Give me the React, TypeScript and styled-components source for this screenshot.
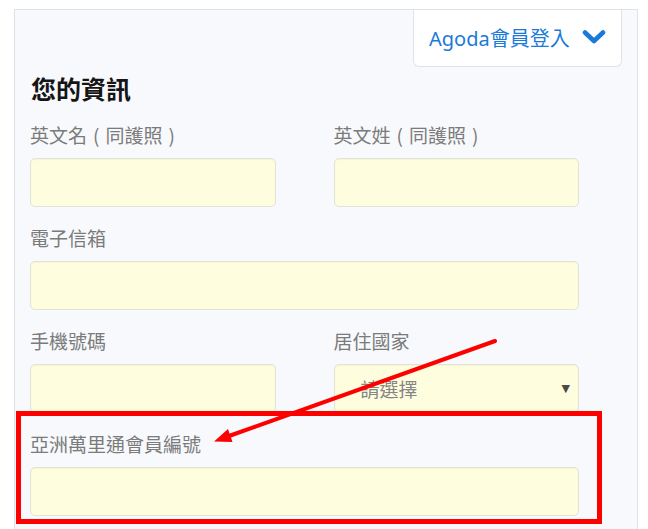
import React from "react";
import styled, { createGlobalStyle } from "styled-components";

const GlobalStyle = createGlobalStyle`
  html, body {
    margin: 0;
    padding: 0;
    background: #ffffff;
    overflow: hidden;
    font-family: "Noto Sans", "Noto Sans CJK TC", sans-serif;
  }
  * { box-sizing: border-box; }
`;

const Page = styled.div`
  position: relative;
  width: 648px;
  height: 529px;
  padding: 9px 0 0 14px;
  overflow: hidden;
`;

const Panel = styled.section`
  width: 624px;
  min-height: 560px;
  display: flex;
  flex-direction: column;
  background: #f7f9fc;
  border: 1px solid #dfe3e8;
  padding: 0 15px 30px 15px;
`;

const LoginButton = styled.button`
  align-self: flex-end;
  height: 57px;
  width: 209px;
  display: flex;
  align-items: center;
  justify-content: space-between;
  padding: 0 15px 2px 15px;
  background: #ffffff;
  border: 1px solid #dfe3e8;
  border-top: none;
  border-radius: 0 0 6px 6px;
  color: #1a7ad9;
  font-family: "Noto Sans", "Noto Sans CJK TC", sans-serif;
  font-size: 20px;
  cursor: pointer;
`;

const Heading = styled.h2`
  margin: 5px 0 18px 1px;
  font-family: "Noto Sans CJK TC", sans-serif;
  font-size: 25px;
  line-height: 32px;
  font-weight: 700;
  color: #151515;
`;

const FormGrid = styled.div`
  display: grid;
  width: 549px;
  grid-template-columns: 1fr 1fr;
  column-gap: 58px;
  row-gap: 18px;
`;

const Field = styled.div<{ $wide?: boolean }>`
  position: relative;
  grid-column: ${(p) => (p.$wide ? "1 / -1" : "auto")};
`;

const Label = styled.label`
  display: block;
  margin-bottom: 10px;
  font-family: "Noto Sans CJK TC", sans-serif;
  font-size: 19px;
  line-height: 26px;
  color: #7b7b7b;
`;

const Paren = styled.span`
  margin: 0 6px;
`;

const Input = styled.input`
  display: block;
  width: 100%;
  height: 49px;
  margin: 0;
  padding: 0 12px;
  background: #fefedf;
  border: 1px solid #e2e2d6;
  border-radius: 5px;
  box-shadow: inset 0 1px 1px rgba(0, 0, 0, 0.04);
  font-size: 18px;
  outline: none;
`;

const SelectBox = styled.div`
  display: flex;
  align-items: center;
  justify-content: space-between;
  height: 49px;
  padding: 0 8px 0 26px;
  background: #fefedf;
  border: 1px solid #e2e2d6;
  border-radius: 5px;
  box-shadow: inset 0 1px 1px rgba(0, 0, 0, 0.04);
  font-family: "Noto Sans CJK TC", sans-serif;
  font-size: 19px;
  color: #858585;
`;

const Caret = styled.span`
  font-size: 11px;
  color: #4a4a4a;
  font-family: "DejaVu Sans", sans-serif;
`;

const Highlight = styled.div`
  position: absolute;
  top: -20px;
  left: -14px;
  right: -23px;
  bottom: -8px;
  border: 5px solid #ff0000;
  pointer-events: none;
`;

const ArrowLayer = styled.svg`
  position: absolute;
  left: 0;
  top: 0;
  pointer-events: none;
`;

export default function App() {
  return (
    <>
      <GlobalStyle />
      <Page>
        <Panel>
          <LoginButton type="button">
            <span>Agoda會員登入</span>
            <svg width="24" height="16" viewBox="0 0 24 16">
              <polyline
                points="3,3.5 12,12 21,3.5"
                fill="none"
                stroke="#1a7ad9"
                strokeWidth="4.6"
                strokeLinecap="round"
                strokeLinejoin="round"
              />
            </svg>
          </LoginButton>
          <Heading>您的資訊</Heading>
          <FormGrid>
            <Field>
              <Label>
                英文名<Paren>(</Paren>同護照<Paren>)</Paren>
              </Label>
              <Input />
            </Field>
            <Field>
              <Label>
                英文姓<Paren>(</Paren>同護照<Paren>)</Paren>
              </Label>
              <Input />
            </Field>
            <Field $wide>
              <Label>電子信箱</Label>
              <Input />
            </Field>
            <Field>
              <Label>手機號碼</Label>
              <Input />
            </Field>
            <Field>
              <Label>居住國家</Label>
              <SelectBox>
                <span>請選擇</span>
                <Caret>▼</Caret>
              </SelectBox>
            </Field>
            <Field $wide>
              <Label>亞洲萬里通會員編號</Label>
              <Input />
              <Highlight />
            </Field>
          </FormGrid>
        </Panel>
        <ArrowLayer width="648" height="529" viewBox="0 0 648 529">
          <line x1="495" y1="341" x2="229" y2="436" stroke="#ff0000" strokeWidth="4" strokeLinecap="round" />
          <polygon points="214,441.5 232.5,442 228,429" fill="#ff0000" />
        </ArrowLayer>
      </Page>
    </>
  );
}
